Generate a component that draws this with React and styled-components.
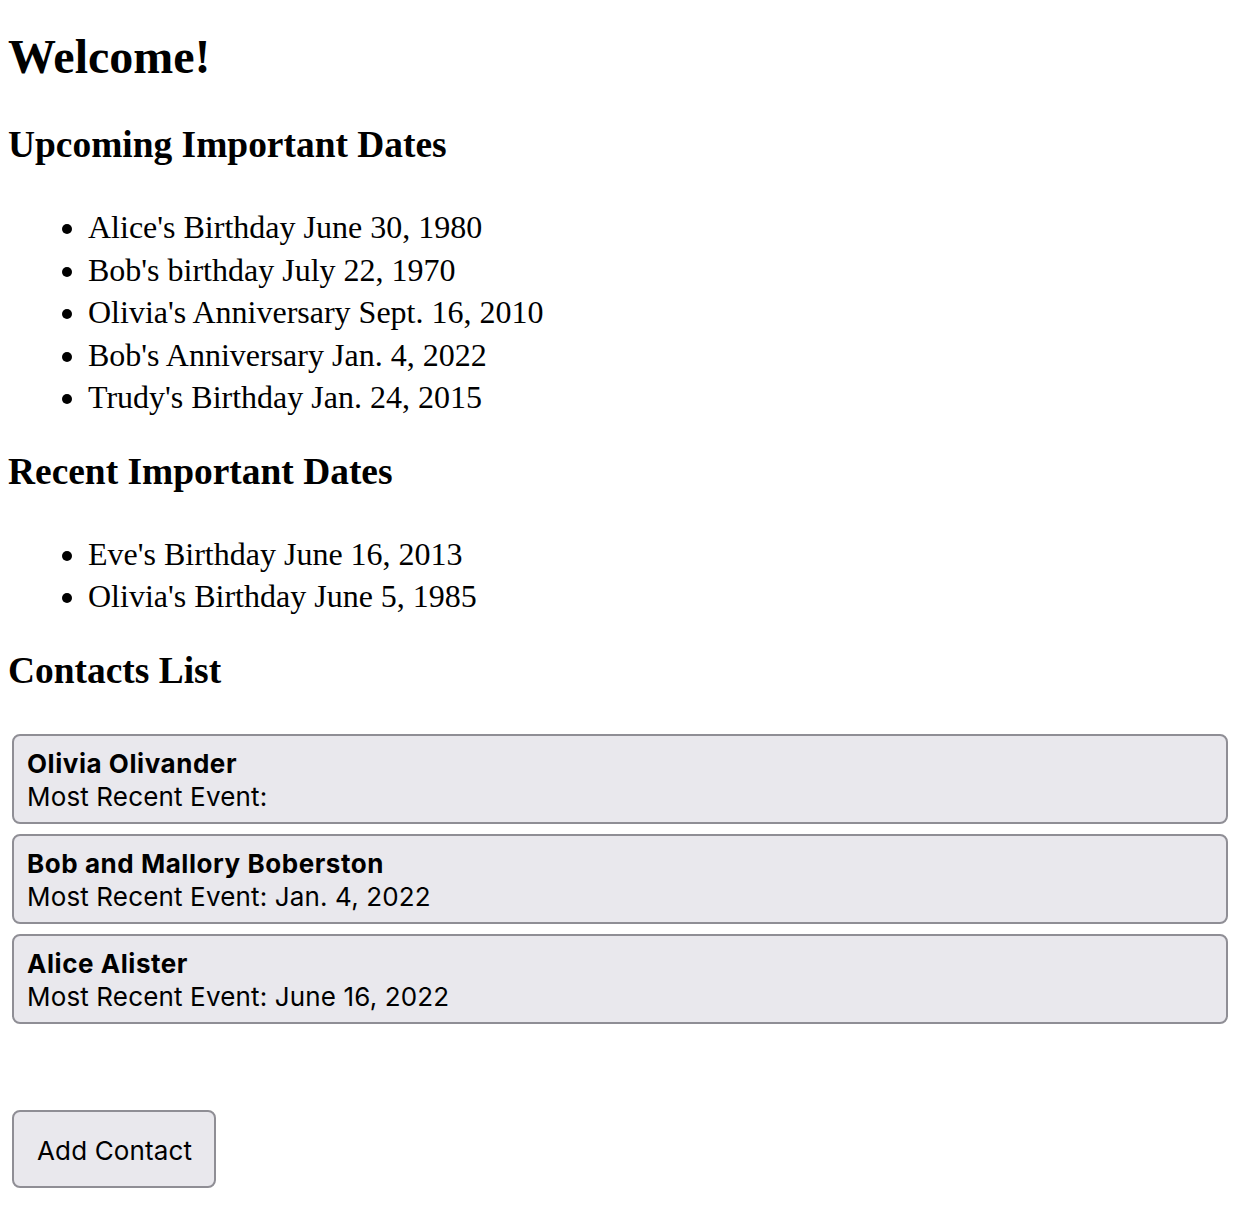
import React from "react";
import styled, { createGlobalStyle } from "styled-components";

const GlobalStyle = createGlobalStyle`
  body {
    margin: 0;
    background: #fff;
    color: #000;
  }
`;

const Page = styled.div`
  padding: 29px 8px 20px;
  font-family: "Liberation Serif", "Times New Roman", serif;
`;

const Title = styled.h1`
  font-size: 48px;
  line-height: 56px;
  font-weight: 700;
  margin: 0 0 38px;
`;

const SectionTitle = styled.h3`
  font-size: 37.44px;
  line-height: 44px;
  font-weight: 700;
  margin: 0 0 39px;
`;

const DateList = styled.ul`
  margin: 0 0 31px;
  padding-left: 80px;
  font-size: 32px;
  line-height: 42.5px;
  list-style: disc;
`;

const ContactList = styled.div`
  display: grid;
  gap: 10px;
  width: 1216px;
  margin: 41px 0 0 4px;
`;

const ButtonBase = styled.button`
  box-sizing: border-box;
  font-family: Inter, "Noto Sans", "Liberation Sans", sans-serif;
  font-size: 26px;
  line-height: 33px;
  letter-spacing: 0.15px;
  color: #000;
  background: #e9e8ed;
  border: 2px solid #8f8e95;
  border-radius: 8px;
  text-align: left;
  cursor: pointer;
`;

const ContactCard = styled(ButtonBase)`
  display: block;
  width: 100%;
  height: 90px;
  padding: 11px 13px 9px;
`;

const ContactName = styled.div`
  font-weight: 700;
  letter-spacing: 0.55px;
`;

const ContactEvent = styled.div`
  font-weight: 400;
`;

const AddButton = styled(ButtonBase)`
  display: block;
  white-space: nowrap;
  height: 78px;
  margin: 86px 0 0 4px;
  padding: 22px 22px 19px 23px;
`;

const upcoming = [
  "Alice's Birthday June 30, 1980",
  "Bob's birthday July 22, 1970",
  "Olivia's Anniversary Sept. 16, 2010",
  "Bob's Anniversary Jan. 4, 2022",
  "Trudy's Birthday Jan. 24, 2015",
];

const recent = ["Eve's Birthday June 16, 2013", "Olivia's Birthday June 5, 1985"];

const contacts = [
  { name: "Olivia Olivander", event: "" },
  { name: "Bob and Mallory Boberston", event: "Jan. 4, 2022" },
  { name: "Alice Alister", event: "June 16, 2022" },
];

const App = () => {
  return (
    <>
      <GlobalStyle />
      <Page>
        <Title>Welcome!</Title>

        <SectionTitle>Upcoming Important Dates</SectionTitle>
        <DateList>
          {upcoming.map((d) => (
            <li key={d}>{d}</li>
          ))}
        </DateList>

        <SectionTitle>Recent Important Dates</SectionTitle>
        <DateList>
          {recent.map((d) => (
            <li key={d}>{d}</li>
          ))}
        </DateList>

        <SectionTitle>Contacts List</SectionTitle>
        <ContactList>
          {contacts.map((c) => (
            <ContactCard key={c.name}>
              <ContactName>{c.name}</ContactName>
              <ContactEvent>Most Recent Event: {c.event}</ContactEvent>
            </ContactCard>
          ))}
        </ContactList>

        <AddButton>Add Contact</AddButton>
      </Page>
    </>
  );
};

export default App;
